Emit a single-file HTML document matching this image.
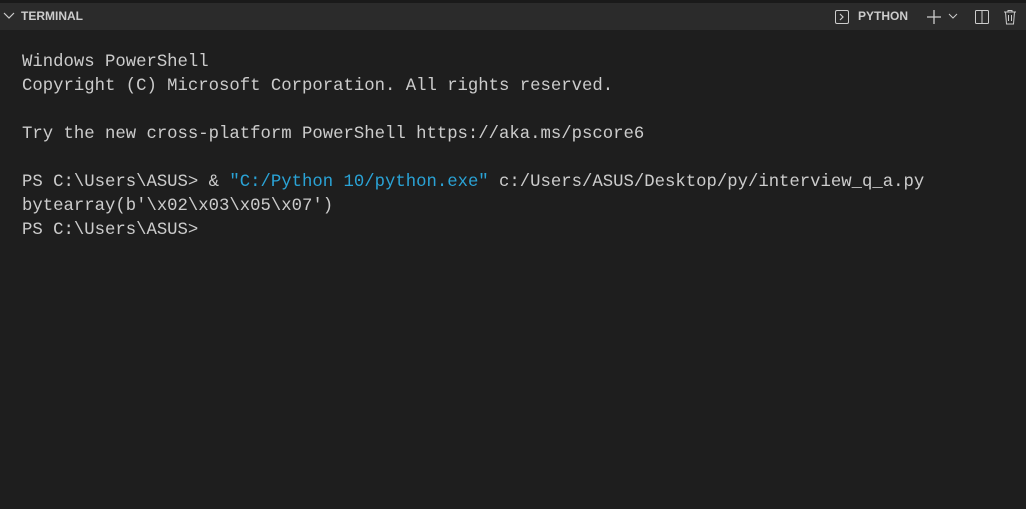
<!DOCTYPE html>
<html><head><style>
body{margin:0;width:1026px;height:509px;background:#1e1e1e;overflow:hidden;font-family:"Liberation Sans",sans-serif}
.top{height:3px;background:#1a1a1a}
.hdr{position:absolute;top:3px;left:0;width:1026px;height:27px;background:#2b2b2b;color:#cccccc;font-size:12px;font-weight:bold}
.term{position:absolute;top:51px;left:22px;font-family:"Liberation Mono",monospace;font-size:17.3px;line-height:24px;color:#cccccc;white-space:pre}
.s{color:#2aa3d6}
</style></head><body>
<div class="top"></div>
<div class="hdr">
<svg style="position:absolute;left:3px;top:8px" width="12" height="10"><path d="M1 2 L6 7 L11 2" stroke="#ccc" fill="none" stroke-width="1.2"/></svg>
<span style="position:absolute;left:21px;top:6px">TERMINAL</span>
<svg style="position:absolute;left:834px;top:6px" width="16" height="16"><rect x="1.5" y="1.5" width="13" height="13" rx="1.5" stroke="#ccc" fill="none"/><path d="M6 5 L9 8 L6 11" stroke="#ccc" fill="none" stroke-width="1.2"/></svg>
<span style="position:absolute;left:858px;top:6px">PYTHON</span>
<svg style="position:absolute;left:925px;top:5px" width="18" height="18"><path d="M9 2 V16 M2 9 H16" stroke="#ccc" stroke-width="1.3"/></svg>
<svg style="position:absolute;left:947px;top:9px" width="12" height="8"><path d="M2 2 L6 6 L10 2" stroke="#ccc" fill="none"/></svg>
<svg style="position:absolute;left:973px;top:5px" width="18" height="18"><rect x="2.5" y="2.5" width="13" height="13" rx="1" stroke="#ccc" fill="none"/><path d="M9 2.5 V15.5" stroke="#ccc"/></svg>
<svg style="position:absolute;left:1002px;top:5px" width="16" height="18"><path d="M2 4 H14 M6 4 V2.5 H10 V4 M3.5 4 L4.5 16 H11.5 L12.5 4 M6.5 7 V13 M9.5 7 V13" stroke="#ccc" fill="none"/></svg>
</div>
<div class="term">Windows PowerShell
Copyright (C) Microsoft Corporation. All rights reserved.

Try the new cross-platform PowerShell https://aka.ms/pscore6

PS C:\Users\ASUS&gt; &amp; <span class="s">"C:/Python 10/python.exe"</span> c:/Users/ASUS/Desktop/py/interview_q_a.py
bytearray(b'\x02\x03\x05\x07')
PS C:\Users\ASUS&gt;</div>
</body></html>
